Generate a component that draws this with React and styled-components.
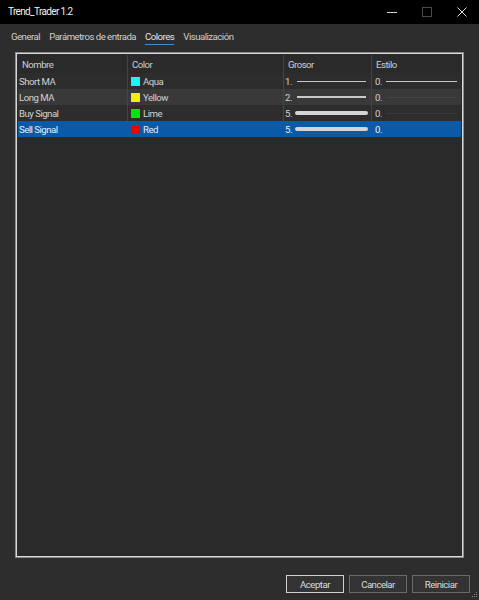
import React from "react";
import styled, { createGlobalStyle } from "styled-components";

const GlobalStyle = createGlobalStyle`
  html, body { margin: 0; padding: 0; background: #2d2d2d; }
  * { box-sizing: border-box; }
`;

const FONT = `Roboto, "Noto Sans", sans-serif`;

const Window = styled.div`
  width: 479px;
  height: 600px;
  background: #2d2d2d;
  display: flex;
  flex-direction: column;
  font-family: ${FONT};
  font-size: 9.6px;
  letter-spacing: -0.5px;
  color: #d6d6d6;
  position: relative;
  overflow: hidden;
`;

const TitleBar = styled.div`
  height: 24px;
  background: #000;
  display: flex;
  align-items: center;
  padding-left: 8px;
`;

const Title = styled.div`
  flex: 1;
  color: #f0f0f0;
  font-size: 10px;
  letter-spacing: -0.65px;
`;

const Controls = styled.div`
  display: flex;
  height: 100%;
`;

const CtrlBtn = styled.div`
  width: 35px;
  height: 100%;
  display: flex;
  align-items: center;
  justify-content: center;
`;

const TabBar = styled.div`
  height: 25px;
  display: flex;
  align-items: center;
  padding: 1px 0 0 11px;
  gap: 9px;
`;

const Tab = styled.div`
  position: relative;
  color: ${(p) => (p.$active ? "#e4e4e4" : "#cfcfcf")};
  white-space: nowrap;
  &::after {
    content: "";
    display: ${(p) => (p.$active ? "block" : "none")};
    position: absolute;
    left: 0;
    right: 0;
    bottom: -3px;
    height: 1px;
    background: #3d8be0;
  }
`;

const Content = styled.div`
  flex: 1;
  padding: 4px 15px 0 15px;
  display: flex;
  flex-direction: column;
`;

const Panel = styled.div`
  height: 506px;
  border: 1px solid #8c8c8c;
  box-shadow: inset 0 0 0 1px #d8d8d8;
  padding: 2px;
  background: #2a2a2a;
`;

const Grid = styled.div`
  display: grid;
  grid-template-columns: 110px 156px 88px 1fr;
`;

const HeadCell = styled.div`
  height: 18px;
  display: flex;
  align-items: center;
  padding-left: ${(p) => p.$pad || 4}px;
  border-right: ${(p) => (p.$last ? "none" : "1px solid #444")};
  color: #cfcfcf;
`;

const Cell = styled.div`
  height: 16px;
  display: flex;
  align-items: center;
  padding-left: ${(p) => p.$pad || 1}px;
  background: ${(p) => (p.$sel ? "#0a5aa8" : p.$alt ? "#393939" : "#2d2d2d")};
  border-right: ${(p) => (p.$last ? "none" : p.$sel ? "1px solid #0a5aa8" : "1px solid #444")};
  color: ${(p) => (p.$sel ? "#e8eef8" : "#d2d2d2")};
  white-space: nowrap;
`;

const Swatch = styled.span`
  width: 9px;
  height: 9px;
  background: ${(p) => p.$c};
  margin-right: 3px;
  flex: none;
`;

const Num = styled.span`
  width: 11px;
  flex: none;
`;

const Line = styled.span`
  display: block;
  width: ${(p) => p.$w}px;
  height: ${(p) => p.$h}px;
  border-radius: ${(p) => (p.$h > 2 ? 3 : 0)}px;
  background: ${(p) => p.$c};
  margin-left: ${(p) => p.$ml || 0}px;
`;

const Footer = styled.div`
  height: 42px;
  display: flex;
  justify-content: flex-end;
  align-items: flex-start;
  padding: 17px 9px 0 0;
  gap: 5px;
`;

const Button = styled.div`
  width: 58px;
  height: 18px;
  display: flex;
  align-items: center;
  justify-content: center;
  background: #333333;
  border: 1px solid ${(p) => (p.$def ? "#d0d0d0" : "#6a6a6a")};
  color: #dcdcdc;
`;

const Grip = styled.svg`
  position: absolute;
  right: 1px;
  bottom: 1px;
`;

const rows = [
  { name: "Short MA", color: "#23f0f0", cname: "Aqua", w: "1.", wh: 1, st: "solid" },
  { name: "Long MA", color: "#f0f000", cname: "Yellow", w: "2.", wh: 2, st: "faint" },
  { name: "Buy Signal", color: "#10e010", cname: "Lime", w: "5.", wh: 4, st: "faint" },
  { name: "Sell Signal", color: "#f00000", cname: "Red", w: "5.", wh: 4, st: "none", sel: true },
];

export default function App() {
  return (
    <Window>
      <GlobalStyle />
      <TitleBar>
        <Title>Trend_Trader 1.2</Title>
        <Controls>
          <CtrlBtn>
            <svg width="10" height="10" viewBox="0 0 10 10">
              <path d="M0 5.5H10" stroke="#d8d8d8" strokeWidth="1" />
            </svg>
          </CtrlBtn>
          <CtrlBtn>
            <svg width="10" height="10" viewBox="0 0 10 10">
              <rect x="0.5" y="0.5" width="9" height="9" fill="none" stroke="#4a4a4a" strokeWidth="1" />
            </svg>
          </CtrlBtn>
          <CtrlBtn>
            <svg width="10" height="10" viewBox="0 0 10 10">
              <path d="M0.5 0.5L9.5 9.5M9.5 0.5L0.5 9.5" stroke="#e0e0e0" strokeWidth="1" />
            </svg>
          </CtrlBtn>
        </Controls>
      </TitleBar>
      <TabBar>
        <Tab>General</Tab>
        <Tab>Parámetros de entrada</Tab>
        <Tab $active>Colores</Tab>
        <Tab>Visualización</Tab>
      </TabBar>
      <Content>
        <Panel>
          <Grid>
            <HeadCell>Nombre</HeadCell>
            <HeadCell>Color</HeadCell>
            <HeadCell>Grosor</HeadCell>
            <HeadCell $last>Estilo</HeadCell>
            {rows.map((r, i) => (
              <React.Fragment key={r.name}>
                <Cell $sel={r.sel} $alt={i === 1}>{r.name}</Cell>
                <Cell $sel={r.sel} $alt={i === 1} $pad={3}>
                  <Swatch $c={r.color} />
                  {r.cname}
                </Cell>
                <Cell $sel={r.sel} $alt={i === 1}>
                  <Num>{r.w}</Num>
                  <Line $w={r.wh > 2 ? 73 : 69} $h={r.wh} $c={r.wh > 2 ? "#d4d4d4" : "#c8c8c8"} $ml={r.wh > 2 ? -1 : 1} />
                </Cell>
                <Cell $sel={r.sel} $alt={i === 1} $last $pad={3}>
                  <Num>{"0."}</Num>
                  {r.st === "solid" && <Line $w={71} $h={1} $c="#c8c8c8" />}
                  {r.st === "faint" && <Line $w={71} $h={1} $c={i === 1 ? "#444" : "#3a3a3a"} />}
                </Cell>
              </React.Fragment>
            ))}
          </Grid>
        </Panel>
      </Content>
      <Footer>
        <Button $def>Aceptar</Button>
        <Button>Cancelar</Button>
        <Button>Reiniciar</Button>
      </Footer>
      <Grip width="7" height="7" viewBox="0 0 7 7">
        <rect x="5" y="0" width="1" height="1" fill="#888" />
        <rect x="3" y="2" width="1" height="1" fill="#888" />
        <rect x="5" y="2" width="1" height="1" fill="#888" />
        <rect x="1" y="4" width="1" height="1" fill="#888" />
        <rect x="3" y="4" width="1" height="1" fill="#888" />
        <rect x="5" y="4" width="1" height="1" fill="#888" />
      </Grip>
    </Window>
  );
}
